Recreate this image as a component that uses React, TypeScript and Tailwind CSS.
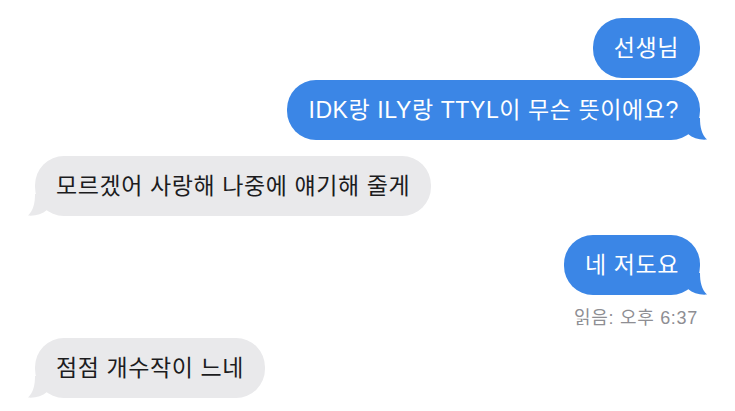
import React from 'react';

const FONT = { fontFamily: '"Liberation Sans", "Noto Sans CJK KR", sans-serif' };

const Tail: React.FC<{ side: 'left' | 'right'; color: string }> = ({ side, color }) => (
  <svg
    width="20"
    height="22"
    viewBox="0 0 20 22"
    className={
      side === 'right'
        ? 'absolute bottom-0 right-[-8px]'
        : 'absolute bottom-0 left-[-8px] -scale-x-100'
    }
  >
    <path d="M0 0 H12 C12 9 13.5 16 19 21.6 C12 22.2 5 20.5 0 16 Z" fill={color} />
  </svg>
);

const Bubble: React.FC<{ text: string; me?: boolean; tail?: boolean; className?: string }> = ({
  text,
  me,
  tail,
  className = '',
}) => (
  <div className={`flex ${me ? 'justify-end' : 'justify-start'} ${className}`}>
    <div
      className={`relative rounded-[29px] px-[21px] py-[15px] text-[23px] leading-[30px] tracking-[0.6px] ${
        me ? 'bg-[#3b86e6] text-white' : 'bg-[#e9e9eb] text-[#1c1c1e]'
      }`}
    >
      {tail && <Tail side={me ? 'right' : 'left'} color={me ? '#3b86e6' : '#e9e9eb'} />}
      <span className="relative whitespace-nowrap">{text}</span>
    </div>
  </div>
);

export default function App() {
  return (
    <div className="w-[735px] h-[411px] bg-white overflow-hidden px-[35px] pt-[18px] flex flex-col" style={FONT}>
      <Bubble me text="선생님" />
      <Bubble me tail text="IDK랑 ILY랑 TTYL이 무슨 뜻이에요?" className="mt-[2px]" />
      <Bubble tail text="모르겠어 사랑해 나중에 얘기해 줄게" className="mt-[16px]" />
      <Bubble me tail text="네 저도요" className="mt-[19px]" />
      <p className="mt-[12px] pr-[2px] text-right text-[18px] leading-[22px] tracking-[0.7px] text-[#8e8e93]">
        읽음: 오후 6:37
      </p>
      <Bubble tail text="점점 개수작이 느네" className="mt-[9px]" />
    </div>
  );
}
